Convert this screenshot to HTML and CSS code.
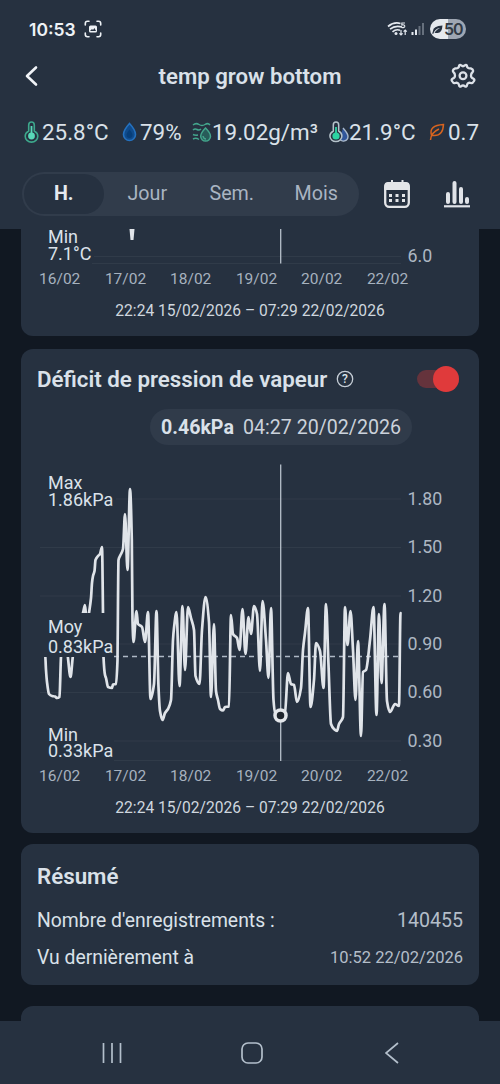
FILE: index.html
```html
<!DOCTYPE html>
<html lang="fr">
<head>
<meta charset="utf-8">
<meta name="viewport" content="width=device-width">
<title>temp grow bottom</title>
<link rel="stylesheet" href="styles.css">
</head>
<body>
<div class="app">
  <header class="top">
    <div class="status">
      <div class="status-left">
        <span class="clock">10:53</span>
        <svg width="18" height="18" viewBox="0 0 18 18" fill="none" stroke="#eef2f6" stroke-width="1.6" stroke-linecap="round"><path d="M1.3 5V3.5Q1.3 1.3 3.5 1.3H5M13 1.3h1.5q2.2 0 2.2 2.2V5M16.700 13v1.500q0 2.200-2.200 2.200H13M5 16.700H3.500q-2.200 0-2.200-2.200V13"/><rect x="5" y="5.500" width="8" height="7" rx="1.500" fill="#eef2f6" stroke="none"/><path d="M6 11l2-2 1 1 1.500-2 1.500 3z" fill="#263140" stroke="none"/></svg>
      </div>
      <div class="status-right">
        <svg width="38" height="17" viewBox="0 0 38 17" fill="none" stroke="#e4e9ef" stroke-width="1.700">
          <path d="M1 5.500Q7 .5 13.500 2.500M3 8.200Q8 4 15 6M5.500 10.800Q9 7.800 13 9.200"/><circle cx="9" cy="12.500" r="1.500" fill="#e4e9ef" stroke="none"/>
          <path d="M18 2h-3.200v2q3-.5 3 1.200T14.300 6.500" stroke-width="1.100"/><path d="M14 9v5m-1.600-1.600L14 14l1.600-1.600M18.200 14V9m-1.600 1.600L18.200 9l1.600 1.600" stroke-width="1.200"/>
          <path d="M25.500 14v-3M29 14V8.500" stroke-width="2"/><path d="M32.500 14V5M36 14V2" stroke="#66707d" stroke-width="2"/>
        </svg>
        <div class="battery"><svg width="11" height="11" viewBox="0 0 11 11"><path d="M1 7Q1 2 10.500 1.500 10 9 5.500 9 3 9 2.500 8.500 5 5 8 4 3 4.500 1.200 10L.2 9.600Z" fill="#263140"/></svg><span>50</span></div>
      </div>
    </div>
    <div class="titlebar">
      <svg class="back" width="16" height="22" viewBox="0 0 16 22" fill="none" stroke="#f0f3f7" stroke-width="2.600" stroke-linecap="round" stroke-linejoin="round"><path d="M12 2.500L3 11l9 8.500"/></svg>
      <h1>temp grow bottom</h1>
      <svg width="28" height="28" viewBox="0 0 28 28" fill="none" stroke="#dce1e8" stroke-width="2.300" stroke-linejoin="round"><path d="M10.200 3.500Q11 2.300 12.200 3.400Q14 5 15.800 3.400Q17 2.300 17.800 3.500Q18.300 6.900 21.600 6.300L23.600 7.500Q24.600 9 23.700 10Q21.900 11.300 22 13.700Q22.100 16 24.500 16.700Q26 17.500 25 19Q23.500 21.700 21.800 21Q18.800 20 18 23Q17.600 25.500 15.800 24.200Q14 22.700 12.200 24.200Q10.400 25.500 10 23Q9.200 20 6.200 21Q4.500 21.700 3 19Q2 17.500 3.500 16.700Q5.900 16 6 13.700Q6.100 11.300 4.300 10Q3.400 9 4.400 7.500L6.400 6.300Q9.700 6.900 10.200 3.500Z"/><circle cx="14" cy="13.800" r="3.400"/></svg>
    </div>
    <div class="metrics">
      <div class="metric temp"><svg width="15" height="22" viewBox="0 0 15 22" fill="none"><path d="M4.700 10V4q0-3 2.800-3t2.800 3v6q3.500 2 3.500 5.200a6.200 5.800 0 0 1-12.600 0Q1.200 12 4.700 10Z" stroke="#3da88c" stroke-width="1.600"/><path d="M7.500 5v9" stroke="#58d8b8" stroke-width="1.800"/><circle cx="7.500" cy="15" r="3.400" fill="#58d8b8"/></svg><span>25.8°C</span></div>
      <div class="metric hum"><svg width="15" height="20" viewBox="0 0 15 20"><path d="M7.500 1.500Q13.500 8 13.500 12.500a6 6 0 0 1-12 0Q1.500 8 7.500 1.500Z" fill="#104b8b" stroke="#2471bf" stroke-width="1.600"/><path d="M7.500 7.500q3 3.500 3 5.500a3 3 0 0 1-6 0q0-2 3-5.500Z" fill="#073e79"/></svg><span>79%</span></div>
      <div class="metric abs"><svg width="20" height="20" viewBox="0 0 20 20" fill="none" stroke="#43a58c" stroke-width="1.500"><path d="M1 3q3-2.500 6-.5t6 0 5 .5M1 8q2-1.800 4-.5t4-.5M1 12.500q2 1 5 .5M1 17q3-1.500 6 .5"/><path d="M13.500 6q5 5 5 8.200a4.800 4.800 0 0 1-9.800 0Q8.700 11 13.500 6Z" fill="#285c59"/><path d="M11 14q.5 3 3 3"/></svg><span>19.02g/m³</span></div>
      <div class="metric dew"><svg width="20" height="22" viewBox="0 0 20 22" fill="none"><path d="M14 7q5 5.500 5 8.500a4.500 4.700 0 0 1-8.500 2" fill="#31569b" stroke="#a9b9cc" stroke-width="1.400"/><path d="M4.300 10V4q0-3 2.700-3t2.700 3v6q3.200 2 3.200 5a6 5.600 0 0 1-12 0Q.9 12 4.300 10Z" fill="#263140" stroke="#b5c3cb" stroke-width="1.500"/><path d="M7 6v9" stroke="#2dd3a3" stroke-width="1.800"/><circle cx="7" cy="15" r="3.600" fill="#2dd3a3"/></svg><span>21.9°C</span></div>
      <div class="metric vpd"><svg width="16" height="18" viewBox="0 0 16 18" fill="none" stroke="#d8641f" stroke-width="1.500"><path d="M1.500 17Q2 9.500 10 6M2.500 12.200Q-.5 2.500 14.500 1.500 14 12.500 5.500 12.500H3"/></svg><span>0.7</span></div>
    </div>
    <div class="controls">
      <div class="tabs"><span class="tab active">H.</span><span class="tab">Jour</span><span class="tab">Sem.</span><span class="tab">Mois</span></div>
      <svg class="calendar" width="28" height="30" viewBox="0 0 28 30"><rect x="2.200" y="4.200" width="23.600" height="23.600" rx="4" fill="none" stroke="#e3e5e8" stroke-width="2.300"/><path d="M1.200 11V7q0-4 4-4h17.600q4 0 4 4v4ZM8 1h2v4H8ZM18.500 1h2v4h-2Z" fill="#e3e5e8"/><path d="M6 15h3v3H6zM12.500 15h3v3h-3zM19 15h3v3h-3zM6 20h3v3H6zM12.500 20h3v3h-3zM19 20h3v3h-3z" fill="#e3e5e8"/></svg>
      <svg width="26" height="28" viewBox="0 0 26 28" fill="none" stroke="#e0e3e8" stroke-width="4" stroke-linecap="round"><path d="M4 14v8M10.500 3v19M17 9v13M23 19v3"/><path d="M0 26.300h26" stroke-width="2.200" stroke-linecap="butt"/></svg>
    </div>
  </header>
  <main>
    <section class="card previous">
      <svg width="458" height="107" viewBox="21 229 458 107">
        <path class="grid" d="M94 256.500H401M40 263.500H401"/>
        <rect class="mask" x="40" y="229" width="52" height="36"/>
        <path d="M129.500 229h5l-1 11h-3z" fill="#e0e4e9"/><path class="cursor" d="M280.700 229v34.500"/>
        <g class="label"><text x="48" y="243.300">Min</text><text x="48" y="260.300">7.1°C</text></g>
        <text class="scale" x="407.500" y="262">6.0</text>
        <g class="date"><text x="59.700" y="283.500">16/02</text><text x="125.500" y="283.500">17/02</text><text x="190.700" y="283.500">18/02</text><text x="256.500" y="283.500">19/02</text><text x="321.700" y="283.500">20/02</text><text x="387.500" y="283.500">22/02</text></g>
        <text class="range" x="250" y="315.500">22:24 15/02/2026 – 07:29 22/02/2026</text>
      </svg>
    </section>
    <section class="card chart-card">
      <div class="card-head"><h2>Déficit de pression de vapeur</h2><svg width="18" height="18" viewBox="0 0 18 18"><circle cx="9" cy="9" r="7.700" fill="none" stroke="#c5cdd6" stroke-width="1.300"/><text class="help" x="9" y="13">?</text></svg><div class="switch"><i></i></div></div>
      <div class="reading"><b>0.46kPa</b><span>04:27 20/02/2026</span></div>
      <svg class="chart" width="458" height="373" viewBox="21 460 458 373">
        <path class="grid" d="M40 499H401M40 547.500H401M40 596H401M40 644H401M40 692.500H401M40 741H401M40 760.500H401"/>
        <path d="M114 656.500H401" fill="none" stroke="#aeb9c5" stroke-width="1.300" stroke-dasharray="5 4"/>
        <path class="line" id="vpd-line" data-points="45,652 46,670 47,682 49,694 52,696 55,696.5 57,698 59.5,697 61,657 64,635 67.5,654 70.5,677 73,655 80,620 83,613 85,605 87,625 89,613 91,598 92,583 93,576 94.5,571 95.5,560 98,556 100,554 102,547 103,613 103.5,657 105,675 106,678 108,687 112,688 113,684.5 116,684 117.5,660 118,600 118.5,560 120,556 123,549 125,514 127.5,570 130,489 131.8,540 132.500,620 133.5,642 136.5,611 138,624 142,627 145,642 148,612 150.5,699 154,684 156.5,611 158.5,687 160,711 162.5,720 165,713 168,709 171,700 173,640 174,628 176.5,612 179.5,686 182.5,606 185,670 188,607 191,618 194,630 195.5,676 199.5,684 202,630 205.5,597 209,622 211,697 214,624 216,691 218,700 220,709 223,710.5 225,707 229,706.5 231,615 233,634 237,638 239.5,650 242.5,609 245.5,654 248.5,617 251,634 254,606 257,614 260,671 262.5,601 266,640 268.5,678 271,608 273.5,700 275,712 280.5,715 285,712 288,673 291,684 294,685 297,702 301,688 303,650 305,633 308,608 310.5,707 314,680 316,643 320,651 323.5,688 326,604 328.5,665 331,724 334,729 337,731 339,724 343,717 345,607 347.5,645 350.5,611 353,650 355.5,700 358,641 361,736 363,672 366,670 370,640 373.5,607 376.5,715 379,614 381.5,683 384.5,604 387,701 390,712 395,704 399,706 400.5,613"/>
        <rect class="mask" x="40" y="474" width="76" height="35"/><rect class="mask" x="40" y="613" width="73" height="44"/><rect class="mask" x="40" y="725" width="74" height="36"/>
        <path class="cursor" d="M280.700 464.500V761"/><circle cx="280.500" cy="715.500" r="5.500" fill="#1f252d" stroke="#e3e6ea" stroke-width="3.500"/>
        <g class="label"><text x="48" y="488.500">Max</text><text x="48" y="505.500">1.86kPa</text><text x="48" y="632.500">Moy</text><text x="48" y="652.500">0.83kPa</text><text x="48" y="740.500">Min</text><text x="48" y="757.300">0.33kPa</text></g>
        <g class="scale"><text x="407.500" y="505">1.80</text><text x="407.500" y="553">1.50</text><text x="407.500" y="601.500">1.20</text><text x="407.500" y="650">0.90</text><text x="407.500" y="698">0.60</text><text x="407.500" y="746.500">0.30</text></g>
        <g class="date"><text x="59.700" y="780.500">16/02</text><text x="125.500" y="780.500">17/02</text><text x="190.700" y="780.500">18/02</text><text x="256.500" y="780.500">19/02</text><text x="321.700" y="780.500">20/02</text><text x="387.500" y="780.500">22/02</text></g>
        <text class="range" x="250" y="813">22:24 15/02/2026 – 07:29 22/02/2026</text>
      </svg>
    </section>
    <section class="card summary">
      <h2>Résumé</h2>
      <div class="row"><span>Nombre d'enregistrements :</span><span class="count">140455</span></div>
      <div class="row"><span>Vu dernièrement à</span><span class="seen">10:52 22/02/2026</span></div>
    </section>
    <section class="card next"></section>
  </main>
  <nav>
    <svg width="20" height="22" viewBox="0 0 20 22" stroke="#b3bfcb" stroke-width="1.700"><path d="M1.500 1v20M10 1v20M18.500 1v20"/></svg>
    <svg class="home" width="22" height="22" viewBox="0 0 22 22"><rect x="1" y="1" width="20" height="20" rx="6" fill="none" stroke="#b3bfcb" stroke-width="1.700"/></svg>
    <svg width="14" height="22" viewBox="0 0 14 22" fill="none" stroke="#b3bfcb" stroke-width="1.700"><path d="M13 1L1 11 13 21"/></svg>
  </nav>
</div>
<script src="chart.js"></script>
</body>
</html>
```
FILE: chart.js
```js
// Draws the series as a monotone cubic curve, so it never overshoots a sample.
const line = document.getElementById("vpd-line");
const pts = line.dataset.points.trim().split(/\s+/).map(p => p.split(",").map(Number));
const slopes = pts.slice(1).map((p, i) => (p[1] - pts[i][1]) / (p[0] - pts[i][0]));
const tangents = pts.map((_, i) => {
  if (i === 0 || i === pts.length - 1) return 0;
  const a = slopes[i - 1], b = slopes[i];
  return a * b <= 0 ? 0 : 2 * a * b / (a + b);
});
let d = `M${pts[0]}`;
for (let i = 1; i < pts.length; i++) {
  const [x0, y0] = pts[i - 1], [x1, y1] = pts[i], h = (x1 - x0) / 3;
  d += `C${x0 + h},${y0 + tangents[i - 1] * h} ${x1 - h},${y1 - tangents[i] * h} ${x1},${y1}`;
}
line.setAttribute("d", d);
```
FILE: styles.css
```css
* { box-sizing: border-box; }
body { margin: 0; font-family: Roboto, "Liberation Sans", sans-serif; color: #dae1e9; background: #111822; }
svg { display: block; flex: none; }
h1, h2 { margin: 0; font-weight: 600; }
.app { width: 500px; height: 1084px; display: flex; flex-direction: column; overflow: hidden; }
.top { height: 229px; flex: none; background: #263140; }
.status { height: 54px; padding: 4px 34px 0 29px; display: flex; align-items: center; justify-content: space-between; }
.status-left, .status-right { display: flex; align-items: center; }
.status-left { gap: 8px; }
.status-right { gap: 5px; }
.clock { font: 600 17.5px Inter, sans-serif; color: #eef2f6; }
.battery { width: 36px; height: 20px; border-radius: 10px; background: linear-gradient(90deg, #e5e9ee 50%, #9ea6b2 50%); display: flex; align-items: center; padding-left: 2px; gap: 1px; color: #303944; font: 600 16px Inter, sans-serif; letter-spacing: -1px; }
.titlebar { height: 44px; padding: 0 23px 0 24px; display: flex; align-items: center; justify-content: space-between; }
.titlebar h1 { font-size: 22.2px; line-height: 26px; margin-left: 11px; white-space: nowrap; }
.metrics { height: 68px; padding-left: 24px; display: flex; align-items: center; white-space: nowrap; font-size: 22.4px; }
.metric { display: flex; align-items: center; gap: 3px; flex: none; }
.temp { width: 98px; }
.hum { width: 70px; }
.abs { width: 137px; gap: 0; }
.dew { width: 100px; gap: 0; }
.controls { height: 54px; padding: 1px 29px 0 22px; display: flex; align-items: center; }
.tabs { width: 337px; height: 44px; border-radius: 22px; background: #313c4b; display: flex; padding: 2px; font-size: 19.7px; color: #a9b4c2; }
.tab { width: 85px; display: grid; place-items: center; padding-left: 3px; }
.tab.active { width: 80px; padding: 0; border-radius: 20px; background: #263140; color: #e5e9ef; font-weight: 700; }
.calendar { margin: 0 33px 0 24px; }
main { height: 792px; flex: none; overflow: hidden; padding: 0 21px; background: #111822; }
.card { background: #263140; border-radius: 12px; overflow: hidden; }
.previous { height: 107px; border-radius: 0 0 12px 12px; }
.chart-card { height: 484px; margin-top: 13px; }
.card-head { height: 60px; padding: 0 20px 0 16px; display: flex; align-items: center; }
.card h2 { font-size: 22.3px; line-height: 26px; margin-right: 9px; white-space: nowrap; }
.help { font: 500 12px Roboto, sans-serif; fill: #dae1e9; text-anchor: middle; }
.switch { width: 42px; height: 18px; margin-left: auto; border-radius: 9px; background: #65333c; display: flex; align-items: center; justify-content: flex-end; }
.switch i { width: 26px; height: 26px; border-radius: 50%; background: #e03a3b; flex: none; }
.reading { width: 262px; height: 36px; margin-left: 129px; margin-bottom: 15px; padding: 1px 11px 0; border-radius: 18px; background: #303b4a; display: flex; align-items: center; justify-content: space-between; font-size: 19.6px; white-space: nowrap; }
.reading span { color: #cbd2db; }
.summary { height: 141px; margin-top: 11px; padding: 19px 16px 0; }
.summary h2 { height: 39px; }
.row { height: 37px; display: flex; align-items: center; justify-content: space-between; font-size: 19.35px; }
.count { color: #b4bec9; font-size: 19.6px; }
.seen { color: #b4bec9; font-size: 16.5px; }
.next { height: 60px; margin-top: 21px; }
.grid { stroke: #303b49; stroke-width: 1; fill: none; }
.cursor { stroke: #b7c0ca; stroke-width: 1.3; }
.line { fill: none; stroke: #e0e4e9; stroke-width: 2.7; stroke-linejoin: round; stroke-linecap: round; }
.mask { fill: #263140; }
.label { font-size: 18px; fill: #dbe2ea; }
.scale { font-size: 17.8px; fill: #adb7c3; }
.date { font-size: 15.5px; fill: #a6b2bf; text-anchor: middle; }
.range { font-size: 15.6px; fill: #cfd7df; text-anchor: middle; }
nav { height: 63px; flex: none; padding: 0 101px 0 102px; background: #263140; display: flex; align-items: center; justify-content: space-between; }
.home { margin-right: 3px; }
```
